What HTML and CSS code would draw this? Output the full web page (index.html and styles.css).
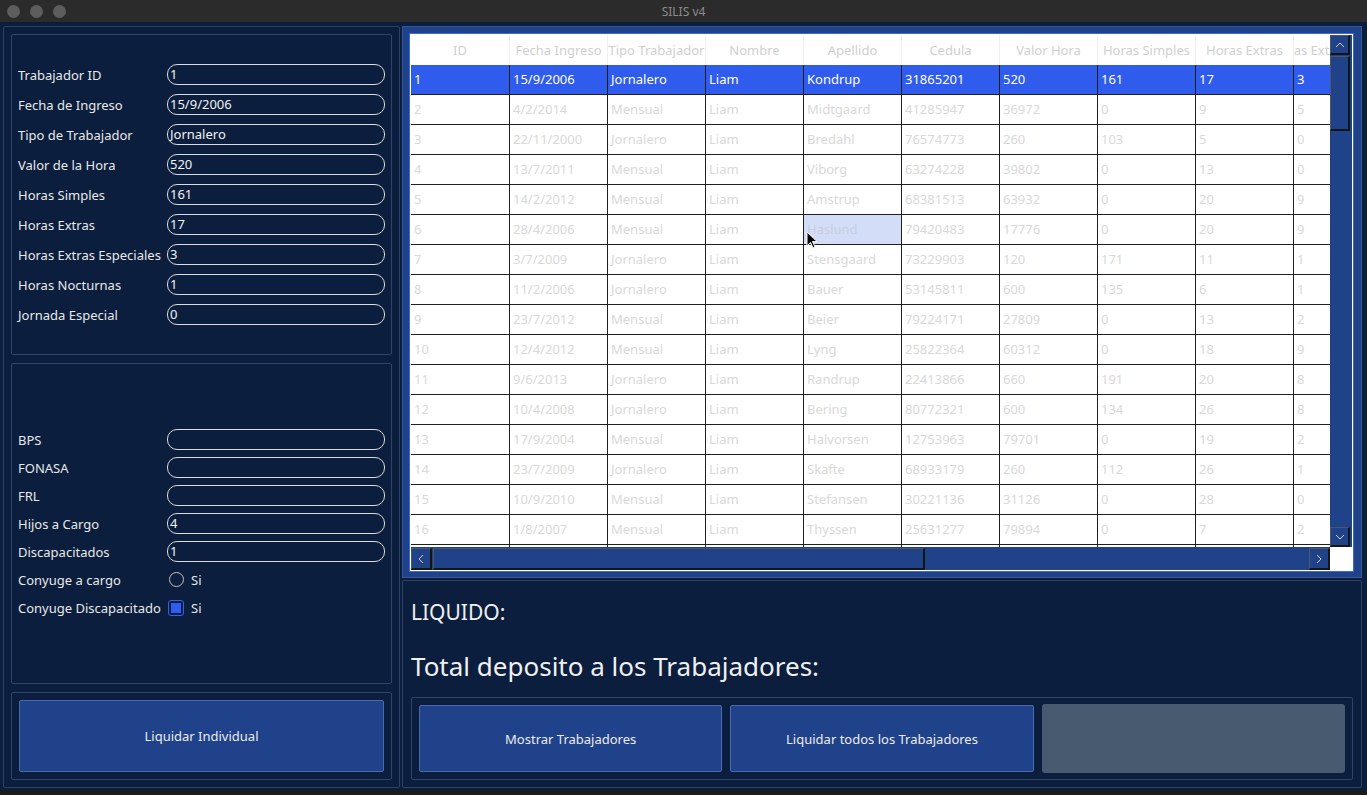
FILE: index.html
```html
<!DOCTYPE html>
<html lang="es">
<head>
<meta charset="utf-8">
<title>SILIS v4</title>
<link rel="stylesheet" href="styles.css">
</head>
<body>
<div class="titlebar">
  <div class="dots"><span class="dot"></span><span class="dot"></span><span class="dot"></span></div>
  <div class="title">SILIS v4</div>
  <div></div>
</div>
<div class="app">
  <div class="leftcol">
    <div class="group g1">
      <div class="row"><span class="lbl">Trabajador ID</span><div class="field">1</div></div>
      <div class="row"><span class="lbl">Fecha de Ingreso</span><div class="field">15/9/2006</div></div>
      <div class="row"><span class="lbl">Tipo de Trabajador</span><div class="field">Jornalero</div></div>
      <div class="row"><span class="lbl">Valor de la Hora</span><div class="field">520</div></div>
      <div class="row"><span class="lbl">Horas Simples</span><div class="field">161</div></div>
      <div class="row"><span class="lbl">Horas Extras</span><div class="field">17</div></div>
      <div class="row"><span class="lbl">Horas Extras Especiales</span><div class="field">3</div></div>
      <div class="row"><span class="lbl">Horas Nocturnas</span><div class="field">1</div></div>
      <div class="row"><span class="lbl">Jornada Especial</span><div class="field">0</div></div>
    </div>
    <div class="group g2">
      <div class="row"><span class="lbl">BPS</span><div class="field"></div></div>
      <div class="row"><span class="lbl">FONASA</span><div class="field"></div></div>
      <div class="row"><span class="lbl">FRL</span><div class="field"></div></div>
      <div class="row"><span class="lbl">Hijos a Cargo</span><div class="field">4</div></div>
      <div class="row"><span class="lbl">Discapacitados</span><div class="field">1</div></div>
      <div class="row"><span class="lbl">Conyuge a cargo</span><div class="opt"><span class="radio"></span><span>Si</span></div></div>
      <div class="row"><span class="lbl">Conyuge Discapacitado</span><div class="opt"><span class="check"><span class="checkfill"></span></span><span>Si</span></div></div>
    </div>
    <div class="group g3">
      <div class="btn">Liquidar Individual</div>
    </div>
  </div>
  <div class="rightcol">
    <div class="tableframe">
      <div class="tablewidget">
        <div class="viewport">
          <div class="trow head">
            <div class="hc">ID</div><div class="hc">Fecha Ingreso</div><div class="hc">Tipo Trabajador</div><div class="hc">Nombre</div><div class="hc">Apellido</div><div class="hc">Cedula</div><div class="hc">Valor Hora</div><div class="hc">Horas Simples</div><div class="hc">Horas Extras</div><div class="hc">Horas Extras Especiales</div>
          </div>
          <div class="trow sel"><div class="c">1</div><div class="c">15/9/2006</div><div class="c">Jornalero</div><div class="c">Liam</div><div class="c">Kondrup</div><div class="c">31865201</div><div class="c">520</div><div class="c">161</div><div class="c">17</div><div class="c">3</div></div>
          <div class="trow"><div class="c">2</div><div class="c">4/2/2014</div><div class="c">Mensual</div><div class="c">Liam</div><div class="c">Midtgaard</div><div class="c">41285947</div><div class="c">36972</div><div class="c">0</div><div class="c">9</div><div class="c">5</div></div>
          <div class="trow"><div class="c">3</div><div class="c">22/11/2000</div><div class="c">Jornalero</div><div class="c">Liam</div><div class="c">Bredahl</div><div class="c">76574773</div><div class="c">260</div><div class="c">103</div><div class="c">5</div><div class="c">0</div></div>
          <div class="trow"><div class="c">4</div><div class="c">13/7/2011</div><div class="c">Mensual</div><div class="c">Liam</div><div class="c">Viborg</div><div class="c">63274228</div><div class="c">39802</div><div class="c">0</div><div class="c">13</div><div class="c">0</div></div>
          <div class="trow"><div class="c">5</div><div class="c">14/2/2012</div><div class="c">Mensual</div><div class="c">Liam</div><div class="c">Amstrup</div><div class="c">68381513</div><div class="c">63932</div><div class="c">0</div><div class="c">20</div><div class="c">9</div></div>
          <div class="trow"><div class="c">6</div><div class="c">28/4/2006</div><div class="c">Mensual</div><div class="c">Liam</div><div class="c hover">Haslund</div><div class="c">79420483</div><div class="c">17776</div><div class="c">0</div><div class="c">20</div><div class="c">9</div></div>
          <div class="trow"><div class="c">7</div><div class="c">3/7/2009</div><div class="c">Jornalero</div><div class="c">Liam</div><div class="c">Stensgaard</div><div class="c">73229903</div><div class="c">120</div><div class="c">171</div><div class="c">11</div><div class="c">1</div></div>
          <div class="trow"><div class="c">8</div><div class="c">11/2/2006</div><div class="c">Jornalero</div><div class="c">Liam</div><div class="c">Bauer</div><div class="c">53145811</div><div class="c">600</div><div class="c">135</div><div class="c">6</div><div class="c">1</div></div>
          <div class="trow"><div class="c">9</div><div class="c">23/7/2012</div><div class="c">Mensual</div><div class="c">Liam</div><div class="c">Beier</div><div class="c">79224171</div><div class="c">27809</div><div class="c">0</div><div class="c">13</div><div class="c">2</div></div>
          <div class="trow"><div class="c">10</div><div class="c">12/4/2012</div><div class="c">Mensual</div><div class="c">Liam</div><div class="c">Lyng</div><div class="c">25822364</div><div class="c">60312</div><div class="c">0</div><div class="c">18</div><div class="c">9</div></div>
          <div class="trow"><div class="c">11</div><div class="c">9/6/2013</div><div class="c">Jornalero</div><div class="c">Liam</div><div class="c">Randrup</div><div class="c">22413866</div><div class="c">660</div><div class="c">191</div><div class="c">20</div><div class="c">8</div></div>
          <div class="trow"><div class="c">12</div><div class="c">10/4/2008</div><div class="c">Jornalero</div><div class="c">Liam</div><div class="c">Bering</div><div class="c">80772321</div><div class="c">600</div><div class="c">134</div><div class="c">26</div><div class="c">8</div></div>
          <div class="trow"><div class="c">13</div><div class="c">17/9/2004</div><div class="c">Mensual</div><div class="c">Liam</div><div class="c">Halvorsen</div><div class="c">12753963</div><div class="c">79701</div><div class="c">0</div><div class="c">19</div><div class="c">2</div></div>
          <div class="trow"><div class="c">14</div><div class="c">23/7/2009</div><div class="c">Jornalero</div><div class="c">Liam</div><div class="c">Skafte</div><div class="c">68933179</div><div class="c">260</div><div class="c">112</div><div class="c">26</div><div class="c">1</div></div>
          <div class="trow"><div class="c">15</div><div class="c">10/9/2010</div><div class="c">Mensual</div><div class="c">Liam</div><div class="c">Stefansen</div><div class="c">30221136</div><div class="c">31126</div><div class="c">0</div><div class="c">28</div><div class="c">0</div></div>
          <div class="trow"><div class="c">16</div><div class="c">1/8/2007</div><div class="c">Mensual</div><div class="c">Liam</div><div class="c">Thyssen</div><div class="c">25631277</div><div class="c">79894</div><div class="c">0</div><div class="c">7</div><div class="c">2</div></div>
          <div class="trow"><div class="c"></div><div class="c"></div><div class="c"></div><div class="c"></div><div class="c"></div><div class="c"></div><div class="c"></div><div class="c"></div><div class="c"></div><div class="c"></div></div>
          <svg class="cursor" width="14" height="20" viewBox="0 0 14 20"><path d="M1 1 L1 15 L4.5 11.5 L7 17 L9 16 L6.5 10.5 L11 10.5 Z" fill="#000" stroke="#fff" stroke-width="1"/></svg>
        </div>
        <div class="vscroll">
          <div class="sbtn"><svg width="14" height="14" viewBox="0 0 14 14"><polyline points="3,9 7,5 11,9" fill="none" stroke="#d0d0d0" stroke-width="1"/></svg></div>
          <div class="vhandle"></div>
          <div class="vspace"></div>
          <div class="sbtn"><svg width="14" height="14" viewBox="0 0 14 14"><polyline points="3,5 7,9 11,5" fill="none" stroke="#d0d0d0" stroke-width="1"/></svg></div>
        </div>
        <div class="hscroll">
          <div class="sbtn h"><svg width="14" height="14" viewBox="0 0 14 14"><polyline points="9,3 5,7 9,11" fill="none" stroke="#d0d0d0" stroke-width="1"/></svg></div>
          <div class="hhandle"></div>
          <div class="hspace"></div>
          <div class="sbtn h"><svg width="14" height="14" viewBox="0 0 14 14"><polyline points="5,3 9,7 5,11" fill="none" stroke="#d0d0d0" stroke-width="1"/></svg></div>
        </div>
        <div class="corner"></div>
      </div>
    </div>
    <div class="bottompanel">
      <div class="liquido">LIQUIDO:</div>
      <div class="total">Total deposito a los Trabajadores:</div>
      <div class="group g4">
        <div class="btn">Mostrar Trabajadores</div>
        <div class="btn">Liquidar todos los Trabajadores</div>
        <div class="btn disabled"></div>
      </div>
    </div>
  </div>
</div>
</body>
</html>
```
FILE: styles.css
```css
html, body {
  margin: 0;
  padding: 0;
}
body {
  width: 1367px;
  height: 795px;
  overflow: hidden;
  background: #1b1b1b;
  font-family: "Noto Sans", "DejaVu Sans", sans-serif;
  font-size: 13px;
  color: #e6e6e6;
}
.titlebar {
  height: 22px;
  background: #2b2b2b;
  display: grid;
  grid-template-columns: 1fr auto 1fr;
  align-items: center;
}
.dots {
  display: flex;
  gap: 10px;
  padding-left: 7px;
}
.dot {
  width: 13px;
  height: 13px;
  border-radius: 50%;
  background: #5d5d5d;
}
.title {
  color: #8c8c8c;
  font-size: 12px;
}
.app {
  height: 762px;
  padding: 4px 5px 2px 3px;
  background: #0b1e3d;
  display: flex;
  gap: 2px;
}
.leftcol {
  width: 397px;
  box-sizing: border-box;
  border: 1px solid #2b4266;
  border-radius: 2px;
  padding: 7px;
  display: flex;
  flex-direction: column;
  gap: 8px;
}
.group {
  box-sizing: border-box;
  border: 1px solid #2e4569;
  border-radius: 2px;
}
.g1, .g2 {
  height: 321px;
  display: flex;
  flex-direction: column;
  justify-content: center;
  padding: 0 6px;
}
.g1 { gap: 9px; }
.g2 { gap: 7px; }
.g3 {
  height: 88px;
  padding: 7px;
  display: flex;
}
.g3 .btn { flex: 1; }
.row {
  display: grid;
  grid-template-columns: 149px 218px;
  align-items: center;
  height: 21px;
}
.lbl {
  white-space: nowrap;
  color: #e8e8e8;
}
.field {
  height: 21px;
  box-sizing: border-box;
  border: 1px solid #dcdcdc;
  border-radius: 10px;
  padding: 0 2px;
  line-height: 19px;
  color: #f2f2f2;
}
.opt {
  display: flex;
  align-items: center;
  gap: 7px;
  padding-left: 2px;
}
.radio {
  width: 15px;
  height: 15px;
  box-sizing: border-box;
  border: 1px solid #c4c4c4;
  border-radius: 50%;
}
.check {
  width: 16px;
  height: 16px;
  box-sizing: border-box;
  border: 1px solid #3564f0;
  border-radius: 3px;
  padding: 2px;
  margin-left: -1px;
}
.checkfill {
  display: block;
  width: 100%;
  height: 100%;
  background: #2f5ded;
}
.btn {
  box-sizing: border-box;
  background: #20428a;
  border: 1px solid #4a68ad;
  border-radius: 2px;
  display: flex;
  align-items: center;
  justify-content: center;
  color: #ececec;
}
.btn.disabled {
  background: #485a70;
  border: none;
  border-radius: 3px;
  margin: -1px 0;
}
.rightcol {
  width: 960px;
  display: flex;
  flex-direction: column;
  gap: 2px;
}
.tableframe {
  height: 552px;
  box-sizing: border-box;
  background: #1f4288;
  border: 1px solid #37589a;
  padding: 7px 8px 6px 7px;
}
.tablewidget {
  width: 943px;
  height: 537px;
  box-sizing: border-box;
  border: 1px solid #ffffff;
  box-shadow: 0 0 0 1px #3a66e6;
  display: grid;
  grid-template-columns: 919px 22px;
  grid-template-rows: 512px 23px;
}
.viewport {
  position: relative;
  overflow: hidden;
  background: #ffffff;
}
.trow {
  display: flex;
  height: 30px;
}
.trow .c, .trow .hc {
  flex: 0 0 98px;
  box-sizing: border-box;
  height: 30px;
  white-space: nowrap;
  overflow: hidden;
}
.trow .c:first-child, .trow .hc:first-child {
  flex-basis: 99px;
}
.hc {
  display: flex;
  justify-content: center;
  align-items: center;
  color: #d0d0d0;
  border-right: 1px solid #f0f0f0;
}
.c {
  border-right: 1px solid #1f1f1f;
  border-bottom: 1px solid #1f1f1f;
  padding-left: 3px;
  line-height: 29px;
  color: #d9d9d9;
}
.sel .c {
  background: #2f5ced;
  color: #ffffff;
}
.c.hover {
  background: #d4ddf7;
  color: #c8cde0;
}
.cursor {
  position: absolute;
  left: 395px;
  top: 196px;
}
.vscroll {
  background: #1f4288;
  display: flex;
  flex-direction: column;
  align-items: flex-start;
}
.sbtn {
  width: 20px;
  height: 20px;
  box-sizing: border-box;
  background: #1f4288;
  border-top: 1px solid #4d5566;
  border-left: 1px solid #4d5566;
  border-right: 2px solid #151515;
  border-bottom: 2px solid #151515;
  display: flex;
  align-items: center;
  justify-content: center;
}
.vhandle {
  width: 20px;
  height: 75px;
  margin-top: 1px;
  box-sizing: border-box;
  border-top: 1px solid #4d5566;
  border-left: 1px solid #4d5566;
  border-right: 2px solid #151515;
  border-bottom: 2px solid #151515;
}
.vspace { flex: 1; }
.hscroll {
  background: #1f4288;
  display: flex;
  align-items: stretch;
  padding-top: 1px;
}
.sbtn.h {
  width: 21px;
  height: 22px;
}
.hhandle {
  width: 492px;
  margin-left: 1px;
  box-sizing: border-box;
  border-top: 1px solid #4d5566;
  border-left: 1px solid #4d5566;
  border-right: 2px solid #151515;
  border-bottom: 2px solid #151515;
}
.hspace { flex: 1; }
.corner {
  background: #ffffff;
}
.bottompanel {
  height: 208px;
  box-sizing: border-box;
  border: 1px solid #2b4266;
  border-radius: 2px;
  padding: 7px 8px 7px 8px;
  display: flex;
  flex-direction: column;
}
.liquido {
  margin-top: 9px;
  font-size: 21px;
  line-height: 30px;
  color: #f0f0f0;
}
.total {
  margin-top: 22px;
  font-size: 26px;
  line-height: 34px;
  color: #f0f0f0;
}
.g4 {
  margin-top: 14px;
  height: 83px;
  padding: 7px;
  display: grid;
  grid-template-columns: 1fr 1fr 1fr;
  gap: 8px;
}
```
